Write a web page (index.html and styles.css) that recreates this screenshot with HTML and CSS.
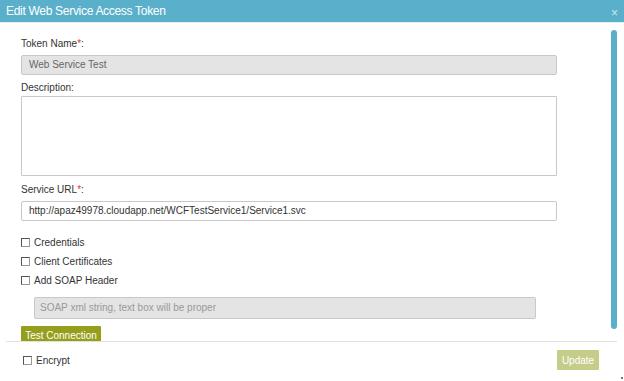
FILE: index.html
```html
<!DOCTYPE html>
<html>
<head>
<meta charset="utf-8">
<link rel="stylesheet" href="styles.css">
</head>
<body>
<div class="dialog">
  <div class="header">
    <span class="title">Edit Web Service Access Token</span>
    <span class="close">&times;</span>
  </div>
  <div class="content">
    <div class="form">
      <label class="label">Token Name<span class="req">*</span>:</label>
      <div class="input disabled">Web Service Test</div>
      <label class="label label-desc">Description:</label>
      <div class="textarea"></div>
      <label class="label label-url">Service URL<span class="req">*</span>:</label>
      <div class="input">http://apaz49978.cloudapp.net/WCFTestService1/Service1.svc</div>
      <div class="checks">
        <label class="check"><input type="checkbox" class="cb"><span>Credentials</span></label>
        <label class="check"><input type="checkbox" class="cb"><span>Client Certificates</span></label>
        <label class="check"><input type="checkbox" class="cb"><span>Add SOAP Header</span></label>
      </div>
      <div class="soap">SOAP xml string, text box will be proper</div>
      <button class="btn-test">Test Connection</button>
    </div>
    <div class="scrollbar"></div>
  </div>
  <div class="footer">
    <label class="check encrypt"><input type="checkbox" class="cb"><span>Encrypt</span></label>
    <button class="btn-update">Update</button>
  </div>
  <div class="grip"></div>
</div>
</body>
</html>
```

FILE: styles.css
```css
* { box-sizing: border-box; }
html, body { margin: 0; padding: 0; background: #fff; }
body { font-family: "Liberation Sans", Arial, sans-serif; color: #333; }

.dialog {
  position: relative;
  width: 624px;
  height: 381px;
  display: flex;
  flex-direction: column;
  background: #fff;
  overflow: hidden;
}

.header {
  height: 23px;
  background: #5aafcb;
  border-bottom: 1px solid #e8eef0;
  display: flex;
  align-items: center;
  justify-content: space-between;
  padding: 0 6px 0 6px;
  flex-shrink: 0;
}
.title {
  color: #fff;
  font-size: 12px;
  letter-spacing: -0.3px;
  line-height: 22px;
}
.close {
  color: #cfe6ef;
  font-size: 12px;
  line-height: 12px;
  margin-top: 3px;
}

.content {
  position: relative;
  flex: 1;
  overflow: hidden;
}
.form {
  width: 557px;
  padding: 15px 0 0 21px;
  display: flex;
  flex-direction: column;
  font-size: 10px;
}
.label {
  display: block;
  height: 12px;
  line-height: 12px;
  font-size: 10px;
  color: #333;
}
.label-desc { margin-top: 7px; }
.label-url { margin-top: 8px; }
.req { color: #e8332e; }

.input {
  margin-top: 5px;
  height: 20px;
  border: 1px solid #c8c8c8;
  border-radius: 2px;
  padding: 0 7px;
  line-height: 18px;
  font-size: 10px;
  color: #333;
  background: #fff;
}
.input.disabled {
  background: #e4e4e4;
  color: #666;
}
.textarea {
  margin-top: 2px;
  height: 80px;
  border: 1px solid #c8c8c8;
  border-radius: 1px;
  background: #fff;
}

.checks {
  margin-top: 15px;
  display: flex;
  flex-direction: column;
  gap: 7px;
}
.check {
  display: flex;
  align-items: center;
  height: 12px;
  font-size: 10px;
  color: #333;
}
.cb {
  -webkit-appearance: none;
  appearance: none;
  width: 9px;
  height: 9px;
  margin: 0 4px 0 0;
  border: 1px solid #555;
  border-right-color: #999;
  border-bottom-color: #999;
  background: #fff;
  border-radius: 0;
  flex-shrink: 0;
}

.soap {
  margin: 11px 21px 0 13px;
  height: 22px;
  border: 1px solid #c8c8c8;
  border-radius: 2px;
  background: #e4e4e4;
  color: #999;
  font-size: 10px;
  line-height: 20px;
  padding: 0 5px;
}

.btn-test {
  align-self: flex-start;
  margin-top: 7px;
  width: 80px;
  height: 20px;
  border: 0;
  border-radius: 1px;
  background: #969f1c;
  color: #fff;
  font-family: "Liberation Sans", Arial, sans-serif;
  font-size: 10px;
  padding: 0;
  line-height: 20px;
}

.scrollbar {
  position: absolute;
  left: 611px;
  top: 7px;
  width: 6px;
  height: 299px;
  border-radius: 3px;
  background: #5aafcb;
}

.footer {
  height: 40px;
  flex-shrink: 0;
  margin: 0 7px 0 6px;
  border-top: 1px solid #e2e2e2;
  display: flex;
  align-items: flex-start;
  justify-content: space-between;
  padding: 8px 18px 0 17px;
}
.encrypt { margin-top: 4px; }
.btn-update {
  width: 42px;
  height: 20px;
  border: 0;
  border-radius: 1px;
  background: #c6cc8a;
  color: #fff;
  font-family: "Liberation Sans", Arial, sans-serif;
  font-size: 10px;
  padding: 0;
}

.grip {
  position: absolute;
  right: 1px;
  bottom: 2px;
  width: 2px;
  height: 2px;
  background: #777;
}
```
